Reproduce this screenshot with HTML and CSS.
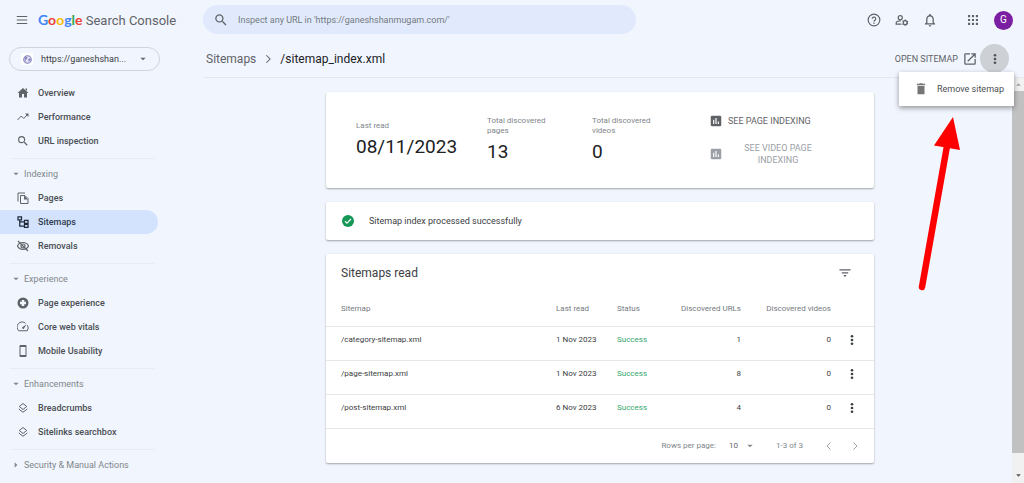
FILE: index.html
```
<!DOCTYPE html>
<html lang="en">
<head>
<meta charset="utf-8">
<title>Google Search Console – Sitemaps</title>
<link rel="stylesheet" href="styles.css">
</head>
<body>
<svg class="sprite" aria-hidden="true">
  <symbol id="dots" viewBox="0 0 24 24"><circle cx="12" cy="4.500" r="2.700"/><circle cx="12" cy="12" r="2.700"/><circle cx="12" cy="19.500" r="2.700"/></symbol>
  <symbol id="search" viewBox="0 0 24 24"><path d="M15.5 14h-.79l-.28-.27A6.47 6.47 0 0 0 16 9.500 6.500 6.500 0 1 0 9.500 16c1.610 0 3.090-.59 4.230-1.570l.27.28v.79l5 4.990L20.490 19l-4.990-5zm-6 0C7.010 14 5 11.990 5 9.500S7.010 5 9.500 5 14 7.010 14 9.500 11.990 14 9.500 14z" transform="translate(-1.200 -1.200) scale(1.100)"/></symbol>
  <symbol id="layers" viewBox="0 0 24 24"><g fill="none" stroke="currentColor" stroke-width="2"><path d="M12 3l7.500 6L12 15 4.500 9z"/><path d="M3.500 14l8.500 6.500 8.500-6.500"/></g></symbol>
  <symbol id="chart" viewBox="0 0 24 24"><path d="M19 3H5a2 2 0 0 0-2 2v14c0 1.100.9 2 2 2h14a2 2 0 0 0 2-2V5a2 2 0 0 0-2-2zM9 17H7v-7h2v7zm4 0h-2V7h2v10zm4 0h-2v-4h2v4z"/></symbol>
  <symbol id="down" viewBox="0 0 24 24"><path d="M4 8l8 8 8-8z"/></symbol>
</svg>

<header class="topbar">
  <div class="brand">
    <button class="icon-btn" aria-label="Menu"><svg class="icon-l" viewBox="0 0 24 24"><path d="M3 5h18v2H3zm0 6h18v2H3zm0 6h18v2H3z"/></svg></button>
    <a class="logo" href="#"><span class="google"><span class="blue">G</span><span class="red">o</span><span class="yellow">o</span><span class="blue">g</span><span class="green">l</span><span class="red">e</span></span> Search Console</a>
  </div>
  <label class="search">
    <svg class="icon-l"><use href="#search"/></svg>
    <input type="text" aria-label="Inspect any URL" placeholder="Inspect any URL in 'https://ganeshshanmugam.com/'">
  </label>
  <div class="tools">
    <button class="icon-btn" aria-label="Help"><svg class="icon-l" viewBox="0 0 24 24"><g fill="none" stroke="currentColor" stroke-width="2"><circle cx="12" cy="12" r="10"/><path d="M9 10a3 3 0 1 1 4.600 2.500C12.500 13.200 12 13.800 12 15"/></g><circle cx="12" cy="17.500" r="1.300"/></svg></button>
    <button class="icon-btn" aria-label="Users and permissions"><svg class="icon-l" viewBox="0 0 24 24"><g fill="none" stroke="currentColor" stroke-width="2"><circle cx="9" cy="8" r="3.500"/><path d="M11 19H2v-2c0-2 3.500-3.500 8-3.500"/><circle cx="17.500" cy="16.500" r="3.400"/></g><path d="M16.500 11h2v3h-2zm0 8h2v3h-2zM12.300 14.200l1-1.700 2.500 1.500-1 1.700zm7 4l1-1.700 2.500 1.500-1 1.700zM12.300 18.800l2.500-1.500 1 1.700-2.500 1.500zm7-4l2.500-1.500 1 1.700-2.500 1.500z"/></svg></button>
    <button class="icon-btn" aria-label="Notifications"><svg class="icon-l" viewBox="0 0 24 24"><path d="M12 22a2 2 0 0 0 2-2h-4c0 1.100.9 2 2 2zm6-6v-5c0-3.070-1.630-5.640-4.500-6.320V4a1.500 1.500 0 0 0-3 0v.68C7.640 5.360 6 7.920 6 11v5l-2 2v1h16v-1l-2-2zm-2 1H8v-6c0-2.480 1.510-4.500 4-4.500s4 2.020 4 4.500v6z" transform="translate(-1.200 -1.200) scale(1.100)"/></svg></button>
    <button class="icon-btn apps" aria-label="Google apps"><svg class="icon-l" viewBox="0 0 24 24"><path d="M3.500 3.500h3.600v3.600H3.500zm6.700 0h3.600v3.600h-3.600zm6.700 0h3.600v3.600h-3.600zM3.500 10.200h3.600v3.600H3.500zm6.700 0h3.600v3.600h-3.600zm6.700 0h3.600v3.600h-3.600zM3.500 16.900h3.600v3.600H3.500zm6.700 0h3.600v3.600h-3.600zm6.700 0h3.600v3.600h-3.600z"/></svg></button>
    <button class="avatar" aria-label="Account">G</button>
  </div>
</header>

<div class="layout">
  <aside class="sidebar">
    <button class="property">
      <span class="favicon"><svg viewBox="0 0 24 24"><circle cx="12" cy="12" r="10" fill="#e4e3f8" stroke="currentColor" stroke-width="3"/><path d="M6 4l6 2-2 5-4 1 3 7-5-5zm10 4l5 4-5 6-2-5z"/></svg></span>
      <span class="property-name">https://ganeshshan...</span>
      <svg class="caret"><use href="#down"/></svg>
    </button>
    <nav>
      <div class="group">
        <a class="item" href="#"><svg viewBox="0 0 24 24"><path d="M10 21v-7h4v7h6v-9h3L12 2 1 12h3v9zM17 3h3v5l-3-3z"/></svg>Overview</a>
        <a class="item" href="#"><svg viewBox="0 0 24 24"><path d="M1 18l7.500-8 5 5L20 8" fill="none" stroke="currentColor" stroke-width="2"/><path d="M16 5h7v7z"/></svg>Performance</a>
        <a class="item" href="#"><svg><use href="#search"/></svg>URL inspection</a>
      </div>
      <div class="group">
        <button class="heading"><svg><use href="#down"/></svg>Indexing</button>
        <a class="item" href="#"><svg viewBox="0 0 24 24"><g fill="none" stroke="currentColor" stroke-width="2"><path d="M2 19V2h14"/><path d="M7 7h9l6 6v10H7z"/></g><path d="M14 7l8 8h-8z"/></svg>Pages</a>
        <a class="item active" href="#" aria-current="page"><svg viewBox="0 0 24 24"><g fill="none" stroke="currentColor" stroke-width="2.500"><path d="M2 1.500h7v6H2zM15 8.500h7v6h-7zM15 16.500h7v6h-7zM5.500 8v12H15M5.500 11.500H15"/></g></svg>Sitemaps</a>
        <a class="item" href="#"><svg viewBox="0 0 24 24"><g fill="none" stroke="currentColor" stroke-width="2.300"><path d="M1 12c2-5 6-7 11-7s9 2 11 7c-2 5-6 7-11 7S3 17 1 12z"/><circle cx="12" cy="12" r="4"/><path d="M2 2l20 20"/></g></svg>Removals</a>
      </div>
      <div class="group">
        <button class="heading"><svg><use href="#down"/></svg>Experience</button>
        <a class="item" href="#"><svg viewBox="0 0 24 24"><path fill-rule="evenodd" d="M12 1a11 11 0 1 0 0 22 11 11 0 0 0 0-22zM9.500 6h5v3.500H18v5h-3.500V18h-5v-3.500H6v-5h3.500z"/></svg>Page experience</a>
        <a class="item" href="#"><svg viewBox="0 0 24 24"><path d="M17 4.500A10 10 0 0 0 3.500 19.500h17A10 10 0 0 0 21 8.500" fill="none" stroke="currentColor" stroke-width="2"/><path d="M19.500 6.500l-6 9a2.200 2.200 0 0 1-3-3z"/></svg>Core web vitals</a>
        <a class="item" href="#"><svg viewBox="0 0 24 24"><path fill-rule="evenodd" d="M7 0h10a2 2 0 0 1 2 2v20a2 2 0 0 1-2 2H7a2 2 0 0 1-2-2V2a2 2 0 0 1 2-2zm0 4v16h10V4z"/></svg>Mobile Usability</a>
      </div>
      <div class="group">
        <button class="heading"><svg><use href="#down"/></svg>Enhancements</button>
        <a class="item" href="#"><svg><use href="#layers"/></svg>Breadcrumbs</a>
        <a class="item" href="#"><svg><use href="#layers"/></svg>Sitelinks searchbox</a>
      </div>
      <div class="group">
        <button class="heading"><svg viewBox="0 0 24 24"><path d="M8 4l8 8-8 8z"/></svg>Security &amp; Manual Actions</button>
      </div>
    </nav>
  </aside>

  <main class="main">
    <div class="crumbbar">
      <div class="crumbs"><a href="#">Sitemaps</a><svg viewBox="0 0 24 24"><path d="M8 3l9 9-9 9" fill="none" stroke="currentColor" stroke-width="2.500"/></svg><h1>/sitemap_index.xml</h1></div>
      <button class="open">OPEN SITEMAP <svg class="icon-l" viewBox="0 0 24 24"><path d="M19 19H5V5h7V3H5a2 2 0 0 0-2 2v14a2 2 0 0 0 2 2h14c1.100 0 2-.9 2-2v-7h-2v7zM14 3v2h3.590l-9.830 9.830 1.410 1.410L19 6.410V10h2V3z" transform="translate(-1.200 -1.200) scale(1.100)"/></svg></button>
      <div class="more-wrap">
        <button class="more" aria-label="More options" aria-expanded="true"><svg><use href="#dots"/></svg></button>
        <div class="menu" role="menu">
          <button role="menuitem"><svg class="icon-l" viewBox="0 0 24 24"><path d="M6 21h12V7H6zM19 3h-4l-1-1h-4L9 3H5v2.500h14z"/></svg>Remove sitemap</button>
        </div>
        <svg class="pointer" viewBox="0 0 50 190"><path d="M12 179L37 38" stroke="#f00" stroke-width="6.500" stroke-linecap="round"/><path d="M43 9l7 33-26-4.500z" fill="#f00"/></svg>
      </div>
    </div>

    <div class="body">
      <div class="cards-area">
      <div class="cards">
        <section class="card summary">
          <div class="stat"><span>Last read</span><strong>08/11/2023</strong></div>
          <div class="stat"><span>Total discovered pages</span><strong>13</strong></div>
          <div class="stat"><span>Total discovered videos</span><strong>0</strong></div>
          <div class="actions">
            <button><svg class="icon-l"><use href="#chart"/></svg><span>SEE PAGE INDEXING</span></button>
            <button disabled><svg class="icon-l"><use href="#chart"/></svg><span>SEE VIDEO PAGE INDEXING</span></button>
          </div>
        </section>
        <section class="card status">
          <svg viewBox="0 0 24 24"><circle cx="12" cy="12" r="12" fill="#159756"/><path d="M6 12.500l4 4 8-8.500" fill="none" stroke="#fff" stroke-width="2.300"/></svg>
          Sitemap index processed successfully
        </section>
        <section class="card">
          <div class="card-head"><h2>Sitemaps read</h2><button class="icon-btn" aria-label="Filter"><svg class="icon-l" viewBox="0 0 24 24"><path d="M2.500 5.500h19v2.400h-19zm4 5h11v2.400h-11zm3.500 5h4v2.400h-4z"/></svg></button></div>
          <table>
            <thead><tr><th>Sitemap</th><th class="date">Last read</th><th class="state">Status</th><th class="num urls">Discovered URLs</th><th class="num videos">Discovered videos</th><th class="menu-col"></th></tr></thead>
            <tbody>
              <tr><td>/category-sitemap.xml</td><td>1 Nov 2023</td><td class="ok">Success</td><td class="num">1</td><td class="num">0</td><td class="menu-col"><button class="icon-btn" aria-label="Options"><svg><use href="#dots"/></svg></button></td></tr>
              <tr><td>/page-sitemap.xml</td><td>1 Nov 2023</td><td class="ok">Success</td><td class="num">8</td><td class="num">0</td><td class="menu-col"><button class="icon-btn" aria-label="Options"><svg><use href="#dots"/></svg></button></td></tr>
              <tr><td>/post-sitemap.xml</td><td>6 Nov 2023</td><td class="ok">Success</td><td class="num">4</td><td class="num">0</td><td class="menu-col"><button class="icon-btn" aria-label="Options"><svg><use href="#dots"/></svg></button></td></tr>
            </tbody>
          </table>
          <div class="pager">
            <label for="rows">Rows per page:</label>
            <span class="select"><select id="rows"><option>10</option><option>25</option></select><svg><use href="#down"/></svg></span>
            <span class="range">1-3 of 3</span>
            <button class="icon-btn" aria-label="Previous page"><svg viewBox="0 0 24 24"><path d="M15 5l-7 7 7 7" fill="none" stroke="currentColor" stroke-width="2"/></svg></button>
            <button class="icon-btn" aria-label="Next page"><svg viewBox="0 0 24 24"><path d="M9 5l7 7-7 7" fill="none" stroke="currentColor" stroke-width="2"/></svg></button>
          </div>
        </section>
      </div>
      </div>
      <div class="scrollbar" aria-hidden="true">
        <svg viewBox="0 0 24 24"><path d="M4 16l8-8 8 8z"/></svg>
        <div class="thumb"></div>
        <svg class="dark"><use href="#down"/></svg>
      </div>
    </div>
  </main>
</div>
</body>
</html>
```
FILE: styles.css
```
* { box-sizing: border-box; }
body {
  margin: 0;
  height: 100vh;
  display: flex;
  flex-direction: column;
  overflow: hidden;
  background: #f1f5fd;
  color: #3c4043;
  font: 9px/12px Roboto, "Liberation Sans", sans-serif;
}
button, input, select { font: inherit; color: inherit; border: 0; background: none; padding: 0; margin: 0; }
a { color: inherit; text-decoration: none; }
svg { display: block; flex: none; fill: currentColor; width: 12px; height: 12px; }
.sprite { position: absolute; width: 0; height: 0; }
.icon-l { width: 14px; height: 14px; }
.icon-btn { display: flex; align-items: center; justify-content: center; color: #5f6368; }

.topbar { display: flex; align-items: center; height: 40px; padding-right: 11px; }
.brand { display: flex; align-items: center; gap: 9px; width: 203px; padding-left: 15px; }
.logo { font-size: 13px; line-height: 20px; color: #5f6368; white-space: nowrap; }
.google { font-family: Lato, Roboto, sans-serif; font-size: 14px; font-weight: 700; }
.blue { color: #4285f4; }
.red { color: #ea4335; }
.yellow { color: #fbbc05; }
.green { color: #34a853; }
.search { display: flex; align-items: center; gap: 10px; flex: 0 1 433px; height: 29px; margin-bottom: 1px; padding: 0 11px; border-radius: 15px; background: #e1eafc; color: #5f6368; }
.search input { flex: 1; min-width: 0; outline: 0; }
.search input::placeholder { color: #747a80; opacity: 1; }
.tools { display: flex; align-items: center; gap: 14px; margin-left: auto; }
.apps { margin-left: 15px; }
.avatar { width: 19px; height: 19px; border-radius: 50%; background: #7b1fa2; color: #fff; font-size: 10px; }

.layout { display: flex; flex: 1; min-height: 0; }
.sidebar { width: 192px; flex: none; overflow: hidden; padding-top: 7px; }
.property { display: flex; align-items: center; width: 151px; height: 24px; margin: 0 0 10px 9px; padding: 0 11px; border: 1px solid #d0d4da; border-radius: 12px; }
.favicon { display: grid; place-items: center; width: 12px; height: 12px; background: #fff; color: #8583bd; }
.favicon svg { width: 9px; height: 9px; }
.property-name { flex: 1; margin-left: 8px; text-align: left; }
.caret { width: 8px; height: 8px; margin-right: 1px; color: #5f6368; }
.group { padding-bottom: 5px; }
.group + .group { padding-top: 4px; background: linear-gradient(#e8ecf2, #e8ecf2) 10px 0 / 144px 1px no-repeat; }
.item { display: flex; align-items: center; gap: 9px; width: 158px; height: 24px; padding-left: 17px; border-radius: 0 12px 12px 0; font-weight: 500; color: #4a4e53; }
.item svg { color: #5f6368; }
.item.active { background: #d3e3fd; color: #303c4f; }
.item.active svg { color: #202c3c; }
.heading { display: flex; align-items: center; gap: 4px; height: 24px; padding-left: 12px; color: #80868b; }
.heading svg { width: 8px; height: 8px; }

.main { display: flex; flex-direction: column; flex: 1; min-width: 0; }
.crumbbar { display: flex; align-items: center; height: 38px; margin-left: 12px; padding: 0 15px 0 2px; border-bottom: 1px solid #e4e8ee; }
.crumbs { display: flex; align-items: center; gap: 7px; margin-right: auto; font-size: 12px; line-height: 18px; color: #5f6368; }
.crumbs svg { width: 10px; height: 10px; }
h1 { margin: 0; font-size: 12px; font-weight: 400; color: #202124; }
.open { display: flex; align-items: center; gap: 5px; color: #5f6368; }
.more-wrap { position: relative; margin-left: 3px; }
.more { display: grid; place-items: center; width: 29px; height: 29px; border-radius: 50%; background: #cdd0d5; color: #50545a; }
.menu { position: absolute; z-index: 2; top: 28px; right: -5px; width: 115px; background: #fff; box-shadow: 0 2px 5px rgba(0, 0, 0, .4); }
.menu button { display: flex; align-items: center; gap: 9px; width: 100%; height: 34px; padding-left: 15px; white-space: nowrap; color: #4c4f52; }
.menu svg { color: #757575; }
.pointer { position: absolute; z-index: 3; top: 64px; right: 49px; width: 50px; height: 190px; fill: none; }

.body { display: flex; flex: 1; min-height: 0; }
.cards-area { flex: 1; min-width: 0; padding: 14px 4px 0 0; }
.cards { display: flex; flex-direction: column; gap: 14px; max-width: 548px; margin: 0 auto; }
.card { background: #fff; border-radius: 2px; box-shadow: 0 1px 2px rgba(60, 64, 67, .45); }
.summary { display: grid; grid-template-columns: 131px 105px 117px 1fr; align-items: center; min-height: 96px; padding-left: 30px; }
.stat span { display: block; width: 66px; font-size: 8px; line-height: 10px; color: #80868b; }
.stat strong { display: block; margin-top: 4px; font-size: 19px; line-height: 24px; font-weight: 400; color: #202124; }
.actions { display: flex; flex-direction: column; gap: 14px; }
.actions button { display: flex; align-items: center; gap: 5px; color: #5f6368; }
.actions button:disabled { color: #9aa0a6; }
.actions button:disabled span { width: 100px; padding: 0 10px; }
.status { display: flex; align-items: center; gap: 15px; min-height: 38px; padding-left: 16px; }
.card-head { display: flex; align-items: center; justify-content: space-between; height: 38px; padding: 0 22px 0 15px; }
h2 { margin: 0; font-size: 12px; font-weight: 400; color: #3c4043; }
table { width: 100%; border-collapse: collapse; table-layout: fixed; font-size: 8px; }
th, td { height: 34px; padding: 0; text-align: left; font-weight: 400; border-bottom: 1px solid #e4e6e8; }
td { padding-bottom: 6px; }
th { color: #757a80; }
th:first-child, td:first-child { padding-left: 15px; }
.date { width: 61px; }
.state { width: 52px; }
.urls { width: 72px; }
.videos { width: 90px; }
.num { text-align: right; }
th.menu-col { width: 43px; }
.menu-col .icon-btn { margin-left: 15px; color: #3c4043; }
.ok { color: #35a66d; }
.pager { display: flex; align-items: center; height: 34px; padding-right: 13px; font-size: 8px; color: #80868b; }
.pager label { margin-left: auto; }
.select { display: flex; align-items: center; margin-left: 13px; color: #5f6368; }
.select select { appearance: none; width: 17px; }
.select svg { width: 8px; height: 8px; color: #80868b; }
.range { margin: 0 20px 0 22px; }
.pager .icon-btn { color: #9aa0a6; }
.pager .icon-btn + .icon-btn { margin-left: 14px; }
.scrollbar { display: flex; flex-direction: column; align-items: center; width: 12px; padding: 3px 0 4px; background: #f1f1f1; }
.scrollbar svg { width: 7px; height: 7px; color: #a0a0a0; }
.scrollbar .dark { color: #505050; margin-top: auto; }
.thumb { width: 100%; flex: 0 1 91%; margin-top: 3px; background: #c1c1c1; }
```
